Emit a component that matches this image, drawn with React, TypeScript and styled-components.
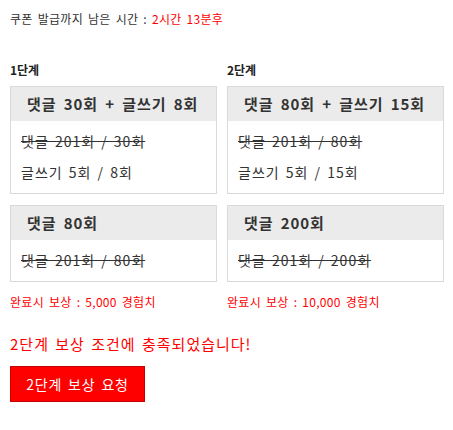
import styled, { createGlobalStyle } from "styled-components";

const GlobalStyle = createGlobalStyle`
  html, body {
    margin: 0;
    padding: 0;
    background: #fff;
  }
  body {
    font-family: "Noto Sans CJK KR", "Noto Sans", sans-serif;
    color: #333;
  }
`;

const Page = styled.div`
  padding: 10px;
`;

const Timer = styled.div`
  font-size: 12px;
  line-height: 18px;
  color: #333;
  letter-spacing: 0.3px;
  word-spacing: 2px;
`;

const Red = styled.span`
  color: #ff0000;
`;

const StageGrid = styled.div`
  margin-top: 33px;
  display: grid;
  grid-template-columns: 207px 217px;
  column-gap: 10px;
`;

const Column = styled.div`
  display: flex;
  flex-direction: column;
`;

const StageLabel = styled.div`
  font-size: 12px;
  font-weight: bold;
  line-height: 18px;
  color: #222;
  margin-bottom: 7px;
`;

const Card = styled.div`
  border: 1px solid #d9d9d9;
  background: #fff;
  & + & {
    margin-top: 11px;
  }
`;

const CardHeader = styled.div`
  background: #ebebeb;
  height: 34px;
  line-height: 34px;
  padding-left: 16px;
  font-size: 15px;
  font-weight: bold;
  color: #333;
  white-space: nowrap;
  letter-spacing: 0.9px;
  word-spacing: 3px;
`;

const CardBody = styled.div`
  padding: 5px 10px 5px;
`;

const Row = styled.div<{ $done?: boolean }>`
  font-size: 14px;
  line-height: 31px;
  color: #333;
  white-space: nowrap;
  letter-spacing: 1px;
  word-spacing: 2px;
  text-decoration: ${({ $done }) => ($done ? "line-through" : "none")};
`;

const Reward = styled.div`
  margin-top: 11px;
  font-size: 12px;
  line-height: 18px;
  color: #ff0000;
  letter-spacing: 0.3px;
  word-spacing: 2px;
`;

const Notice = styled.div`
  margin-top: 22px;
  font-size: 15px;
  line-height: 22px;
  color: #ff0000;
  letter-spacing: 1px;
  word-spacing: 2px;
`;

const RequestButton = styled.button`
  margin-top: 11px;
  width: 135px;
  height: 36px;
  background: #ff0000;
  border: 1px solid #c40000;
  color: #fff;
  font-family: inherit;
  font-size: 14px;
  letter-spacing: 0.8px;
  word-spacing: 2px;
  padding: 0;
  cursor: pointer;
`;

type Mission = {
  title: string;
  rows: { text: string; done: boolean }[];
};

const stages: { label: string; missions: Mission[]; reward: string }[] = [
  {
    label: "1단계",
    missions: [
      {
        title: "댓글 30회 + 글쓰기 8회",
        rows: [
          { text: "댓글 201회 / 30회", done: true },
          { text: "글쓰기 5회 / 8회", done: false },
        ],
      },
      {
        title: "댓글 80회",
        rows: [{ text: "댓글 201회 / 80회", done: true }],
      },
    ],
    reward: "완료시 보상 : 5,000 경험치",
  },
  {
    label: "2단계",
    missions: [
      {
        title: "댓글 80회 + 글쓰기 15회",
        rows: [
          { text: "댓글 201회 / 80회", done: true },
          { text: "글쓰기 5회 / 15회", done: false },
        ],
      },
      {
        title: "댓글 200회",
        rows: [{ text: "댓글 201회 / 200회", done: true }],
      },
    ],
    reward: "완료시 보상 : 10,000 경험치",
  },
];

const App = () => {
  return (
    <>
      <GlobalStyle />
      <Page>
        <Timer>
          쿠폰 발급까지 남은 시간 : <Red>2시간 13분후</Red>
        </Timer>
        <StageGrid>
          {stages.map((stage) => (
            <Column key={stage.label}>
              <StageLabel>{stage.label}</StageLabel>
              {stage.missions.map((m) => (
                <Card key={m.title}>
                  <CardHeader>{m.title}</CardHeader>
                  <CardBody>
                    {m.rows.map((r) => (
                      <Row key={r.text} $done={r.done}>
                        {r.text}
                      </Row>
                    ))}
                  </CardBody>
                </Card>
              ))}
              <Reward>{stage.reward}</Reward>
            </Column>
          ))}
        </StageGrid>
        <Notice>2단계 보상 조건에 충족되었습니다!</Notice>
        <RequestButton>2단계 보상 요청</RequestButton>
      </Page>
    </>
  );
};

export default App;
